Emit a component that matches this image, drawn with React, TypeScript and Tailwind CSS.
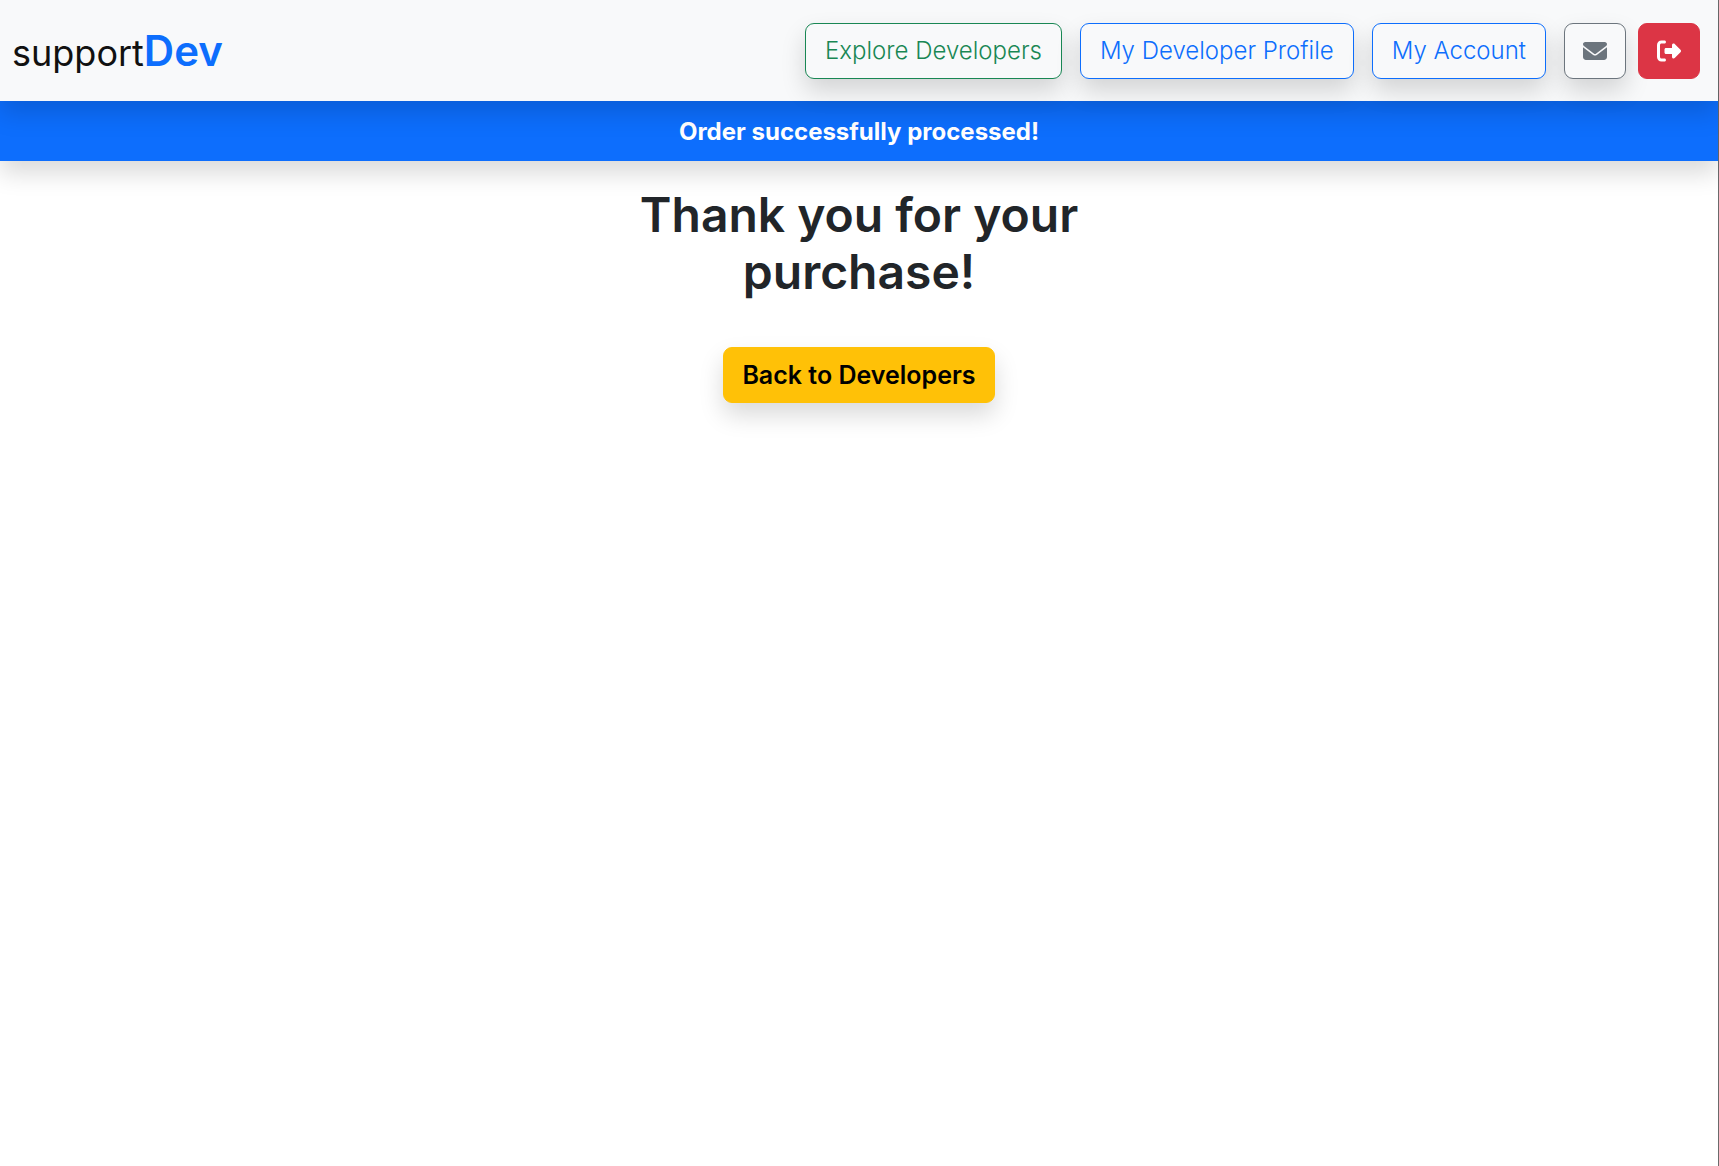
import React from "react";
import { FaEnvelope, FaRightFromBracket } from "react-icons/fa6";

const outline =
  "flex items-center rounded-[9px] border bg-[#f8f9fa] py-[9px] text-[24px] leading-[36px] font-light shadow-[0_12px_24px_rgba(0,0,0,0.15)]";

export default function App() {
  return (
    <div className="min-h-screen border-r border-[#6b6b6b] bg-white font-['Inter',sans-serif] text-[#212529]">
      <header className="relative flex items-center justify-between bg-[#f8f9fa] pt-[23px] pr-[18px] pb-[22px] pl-3 shadow-[0_12px_24px_rgba(0,0,0,0.15)]">
        <a href="#" className="flex items-baseline pt-[2px] text-[36px] leading-[50px] font-normal text-[#111111]">
          support
          <span className="text-[42px] font-semibold text-[#0d6efd]">Dev</span>
        </a>
        <nav className="flex items-center gap-[18px]">
          <a href="#" className={outline + " border-[#198754] px-[19px] text-[#198754]"}>
            Explore Developers
          </a>
          <a href="#" className={outline + " border-[#0d6efd] px-[19px] text-[#0d6efd]"}>
            My Developer Profile
          </a>
          <a href="#" className={outline + " border-[#0d6efd] px-[19px] text-[#0d6efd]"}>
            My Account
          </a>
          <div className="flex gap-3">
            <button type="button" aria-label="Messages" className={outline + " h-14 border-[#6c757d] px-[18px] text-[#6c757d]"}>
              <FaEnvelope />
            </button>
            <button
              type="button"
              aria-label="Log out"
              className="flex h-14 items-center rounded-[9px] border border-[#dc3545] bg-[#dc3545] px-[18px] text-[24px] text-white"
            >
              <FaRightFromBracket />
            </button>
          </div>
        </nav>
      </header>
      <div
        role="status"
        className="bg-[#0d6efd] pt-[13px] pb-[11px] text-center text-[24px] leading-[36px] font-bold text-white shadow-[0_12px_24px_rgba(0,0,0,0.15)]"
      >
        Order successfully processed!
      </div>
      <main className="flex flex-col items-center pt-[25px]">
        <h1 className="w-full max-w-[520px] text-center text-[48px] leading-[57px] font-semibold">
          Thank you for your purchase!
        </h1>
        <a
          href="#"
          className="mt-[47px] rounded-[9px] border border-[#ffc107] bg-[#ffc107] px-[18px] py-[9px] text-[25px] leading-[36px] font-semibold text-black shadow-[0_12px_24px_rgba(0,0,0,0.15)]"
        >
          Back to Developers
        </a>
      </main>
    </div>
  );
}
